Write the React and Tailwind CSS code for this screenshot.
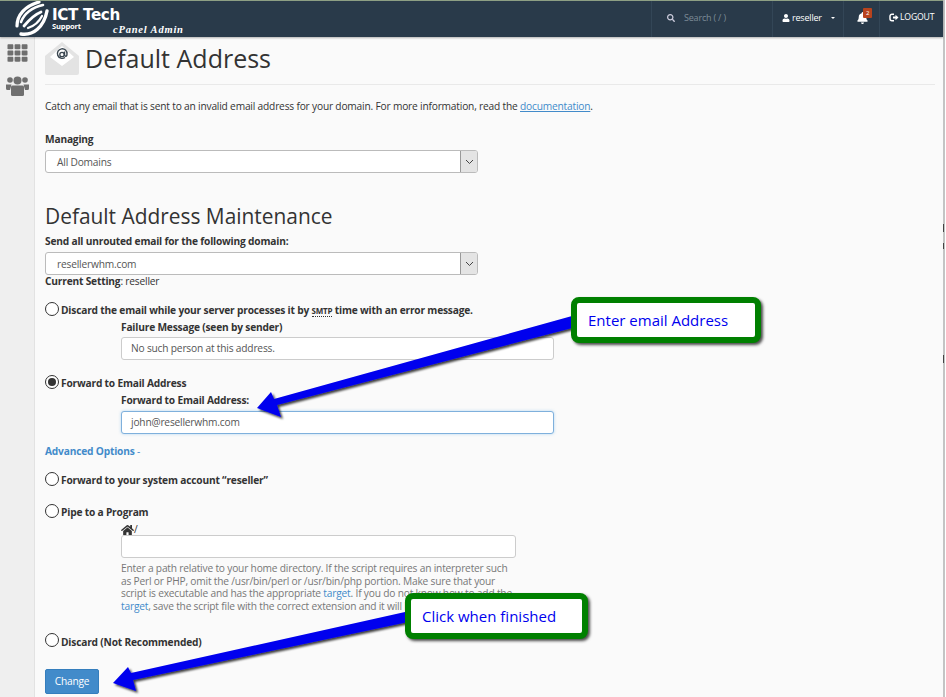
import React from "react";
import { FaTh, FaHome, FaUser, FaBell, FaSearch } from "react-icons/fa";

const font = { fontFamily: '"Open Sans", sans-serif' };

function Logo() {
  return (
    <svg width="34" height="36" viewBox="0 0 34 36" className="shrink-0">
      <g fill="none" stroke="#fff" strokeLinecap="round">
        <path d="M2 25C2 14 10 5 24 1" strokeWidth="3.2" />
        <path d="M6 21C9 13 17 6 28 4" strokeWidth="2.6" />
        <path d="M9 25C14 19 21 13 26 11" strokeWidth="2.8" />
        <path d="M6 33C18 35 29 26 32 10" strokeWidth="3.4" />
        <path d="M13 27C19 25 24 21 27 15" strokeWidth="2.2" />
      </g>
    </svg>
  );
}

function Users() {
  return (
    <svg width="23" height="21" viewBox="0 0 23 21" fill="#6f6f6f">
      <circle cx="4" cy="5" r="2.8" />
      <circle cx="19" cy="5" r="2.8" />
      <circle cx="11.5" cy="5.5" r="4" />
      <path d="M0 9.5h5.5L4 15H1.5A1.5 1.5 0 0 1 0 13.5zM23 9.5h-5.500L19 15h2.500a1.500 1.500 0 0 0 1.500-1.500z" />
      <path d="M6.500 10.500h10a1.500 1.500 0 0 1 1.500 1.500v7.500a1.500 1.500 0 0 1-1.500 1.500h-10A1.500 1.500 0 0 1 5 19.500V12a1.500 1.500 0 0 1 1.500-1.500z" />
    </svg>
  );
}

function Radio({ checked }) {
  return (
    <span className="inline-flex w-[14px] h-[14px] rounded-full border border-[#333] bg-white items-center justify-center shrink-0 relative top-[-2px] mr-[2px]">
      {checked && <span className="w-[8px] h-[8px] rounded-full bg-[#333]" />}
    </span>
  );
}

function Select({ value, pad }) {
  return (
    <div className="w-[433px] h-[23px] border border-[#bbb] rounded-[3px] bg-white flex items-center overflow-hidden">
      <span className={`flex-1 pl-[11px] text-[#555] ${pad}`}>{value}</span>
      <span className="w-[17px] h-full bg-[#e4e4e4] border-l border-[#999] flex items-center justify-center">
        <svg width="9" height="6" viewBox="0 0 9 6">
          <path d="M1 1l3.5 3.5L8 1" fill="none" stroke="#444" strokeWidth="1" />
        </svg>
      </span>
    </div>
  );
}

function TextBox({ value, width = "w-[433px]", focus }) {
  return (
    <div
      className={`${width} h-[23px] rounded-[3px] bg-white flex items-center pl-[9px] text-[#555] border ${
        focus ? "border-[#7fb0dc] shadow-[0_0_3px_rgba(102,175,233,0.5)]" : "border-[#ccc]"
      }`}
    >
      {value}
    </div>
  );
}

function Callout({ text, className }) {
  return (
    <div
      className={`absolute h-[46px] border-[6px] border-[#008000] rounded-[8px] bg-white flex items-center text-[#0000ee] text-[15px] tracking-normal shadow-[2px_2px_3px_rgba(0,0,0,0.7)] ${className}`}
      style={font}
    >
      {text}
    </div>
  );
}

export default function App() {
  return (
    <div className="relative w-[946px] h-[697px] overflow-hidden bg-white text-[10.2px] tracking-[-0.19px] text-[#333]" style={font}>
      <div className="w-[945px] h-full border-r-2 border-[#c4c4c4] flex flex-col bg-[#fafafa]">
        <header className="h-[37px] shrink-0 bg-[#293a4a] border-t border-[#8d9f84] flex items-stretch text-white shadow-[0_1px_2px_rgba(0,0,0,0.3)] z-10">
          <div className="w-[651px] relative pl-[15px] flex">
            <Logo />
            <div className="ml-[3px] leading-none">
              <div className="text-[15.2px] font-bold mt-[7px] tracking-tight" style={{ fontFamily: '"DejaVu Sans", sans-serif' }}>ICT Tech</div>
              <div className="text-[7.6px] font-bold mt-0">Support</div>
            </div>
            <div
              className="absolute left-[113px] top-[21px] text-[10.5px] italic font-bold tracking-[0.8px]"
              style={{ fontFamily: '"Liberation Serif", serif' }}
            >
              cPanel Admin
            </div>
          </div>
          <div className="w-[121px] border-l border-[#334657] flex items-center pl-[15px] pb-[3px] text-[#7d8b97] text-[9px]">
            <FaSearch className="text-[#ccd] w-[8px] h-[8px] mr-[9px]" />
            Search ( / )
          </div>
          <div className="w-[71px] border-l border-[#334657] flex items-center pl-[9px] pb-[3px] text-[9px]">
            <FaUser className="w-[8px] h-[8px] mr-[2px]" />
            reseller
            <span className="ml-[9px] w-0 h-0 border-x-[2px] border-x-transparent border-t-[2px] border-t-white" />
          </div>
          <div className="w-[36px] border-l border-[#334657] flex items-center pl-[13px] pb-[3px] relative">
            <FaBell className="w-[11px] h-[12px]" />
            <span className="absolute left-[19px] top-[7px] w-[9px] h-[10px] rounded-[1px] bg-[#b8431d] text-[6px] leading-[10px] text-center">2</span>
          </div>
          <div className="flex-1 border-l border-[#334657] flex items-center pl-[9px] pb-[3px] text-[8.7px]">
            <svg width="10" height="9" viewBox="0 0 10 9" className="mr-[1px]">
              <path d="M5 1.2H3A2 2 0 0 0 1 3.200v2.600a2 2 0 0 0 2 2h2" fill="none" stroke="#fff" strokeWidth="1.500" />
              <path d="M4 3.500h2.500V1.800L9.500 4.500 6.500 7.200V5.500H4z" fill="#fff" />
            </svg>
            LOGOUT
          </div>
        </header>
        <div className="flex-1 flex min-h-0">
          <aside className="w-[35px] shrink-0 bg-[#efefef] border-r border-[#e2e2e2] flex flex-col items-center pt-[6px] text-[#6f6f6f]">
            <FaTh className="w-[21px] h-[20px]" />
            <div className="mt-[12px]"><Users /></div>
          </aside>
          <main className="flex-1 pl-[10px] pr-[8px]">
            <div className="flex items-center h-[48px] border-b border-[#e9e9e9]">
              <svg width="34" height="33" viewBox="0 0 34 33" className="mt-[-4px]">
                <path d="M0 14L17 0l17 14v17a2 2 0 0 1-2 2H2a2 2 0 0 1-2-2z" fill="#e3e3e3" />
                <path d="M5 15L17 4l12 11-12 9z" fill="#fff" />
                <path d="M20 15.500a4.800 4.800 0 1 1 2-3.500c0 1.500-.5 2.200-1.300 2.200s-1.200-.7-1.200-1.700v-3" fill="none" stroke="#3a4650" strokeWidth="1.400" />
                <circle cx="17" cy="12.500" r="2.200" fill="none" stroke="#3a4650" strokeWidth="1.300" />
              </svg>
              <h1 className="text-[25px] tracking-normal text-[#333] ml-[6px] leading-none mt-[-5px]">Default Address</h1>
            </div>
            <p className="mt-[14px] leading-[14px]">
              Catch any email that is sent to an invalid email address for your domain. For more information, read the{" "}
              <span className="text-[#428bca] underline">documentation</span>.
            </p>
            <div className="mt-[19px] font-bold leading-[14px]">Managing</div>
            <div className="mt-[4px]"><Select value="All Domains" pad="pt-[3px]" /></div>
            <h2 className="mt-[30px] text-[20.9px] tracking-normal leading-[26px]">Default Address Maintenance</h2>
            <div className="mt-[5px] font-bold leading-[14px]">Send all unrouted email for the following domain:</div>
            <div className="mt-[4px]"><Select value="resellerwhm.com" pad="pt-[2px]" /></div>
            <div className="leading-[13px]"><b>Current Setting</b>: reseller</div>

            <div className="mt-[16px] flex items-center h-[14px] font-bold">
              <Radio />
              <span>Discard the email while your server processes it by <span className="text-[8px] border-b border-dotted border-[#333]">SMTP</span> time with an error message.</span>
            </div>
            <div className="ml-[76px]">
              <div className="mt-[2px] font-bold leading-[14px]">Failure Message (seen by sender)</div>
              <div className="mt-[3px]"><TextBox value="No such person at this address." /></div>
            </div>

            <div className="mt-[17px] flex items-center h-[14px] font-bold">
              <Radio checked />
              <span>Forward to Email Address</span>
            </div>
            <div className="ml-[76px]">
              <div className="mt-[2px] font-bold leading-[14px]">Forward to Email Address:</div>
              <div className="mt-[4px]"><TextBox value="john@resellerwhm.com" focus /></div>
            </div>

            <div className="mt-[10px] font-bold leading-[14px] text-[#428bca]">Advanced Options <span className="font-normal">-</span></div>

            <div className="mt-[16px] flex items-center h-[14px] font-bold">
              <Radio />
              <span>Forward to your system account “reseller”</span>
            </div>
            <div className="mt-[18px] flex items-center h-[14px] font-bold">
              <Radio />
              <span>Pipe to a Program</span>
            </div>
            <div className="ml-[76px]">
              <div className="mt-[4px] flex items-center h-[12px] text-[#333]"><FaHome className="w-[13px] h-[12px]" /><span>/</span></div>
              <div className="mt-[-1px]"><TextBox value="" width="w-[395px]" /></div>
              <p className="mt-[4px] w-[395px] leading-[12.6px] text-[#777]">
                Enter a path relative to your home directory. If the script requires an interpreter such as Perl or PHP, omit the /usr/bin/perl or /usr/bin/php portion. Make sure that your script is executable and has the appropriate <span className="text-[#428bca]">target</span>. If you do not know how to add the <span className="text-[#428bca]">target</span>, save the script file with the correct extension and it will be executed.
              </p>
            </div>
            <div className="mt-[23px] flex items-center h-[14px] font-bold">
              <Radio />
              <span>Discard (Not Recommended)</span>
            </div>
            <button className="mt-[20px] w-[54px] h-[25px] bg-[#428bca] border border-[#357ebd] rounded-[2px] text-white" style={font}>Change</button>
          </main>
        </div>
      </div>

      <svg width="946" height="697" viewBox="0 0 946 697" className="absolute left-0 top-0 pointer-events-none">
        <defs>
          <filter id="s" x="-10%" y="-30%" width="120%" height="160%">
            <feDropShadow dx="2" dy="2" stdDeviation="1.200" floodColor="#000" floodOpacity="0.750" />
          </filter>
        </defs>
        <polygon filter="url(#s)" fill="#0000ee" points="572,316 576,327 277,405 281,417 257,408 271,392 274,399" />
        <polygon filter="url(#s)" fill="#0000ee" points="405,612 408,622 133,680 136,691 113,683 128,667 131,673" />
      </svg>
      <Callout text="Enter email Address" className="left-[571px] top-[297px] w-[190px] pl-[11px]" />
      <Callout text="Click when finished" className="left-[405px] top-[593px] w-[183px] pl-[11px]" />
      <div className="absolute left-[943px] top-[224px] w-[1px] h-[8px] bg-[#444]" />
      <div className="absolute left-[943px] top-[243px] w-[1px] h-[6px] bg-[#444]" />
      <div className="absolute left-[943px] top-[355px] w-[1px] h-[8px] bg-[#444]" />
    </div>
  );
}
